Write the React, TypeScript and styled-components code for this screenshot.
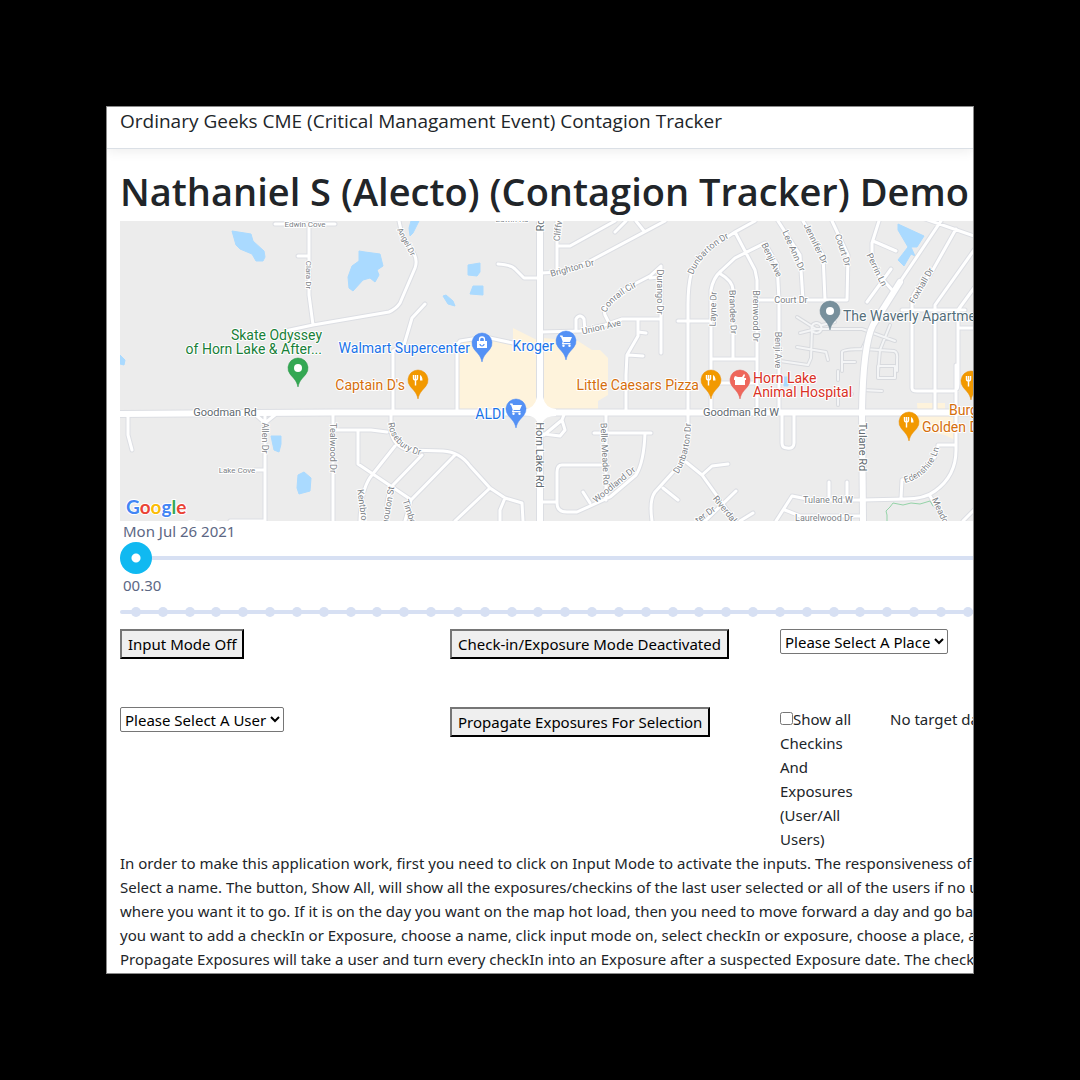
import React, { useState } from "react";
import styled, { createGlobalStyle } from "styled-components";

const GlobalStyle = createGlobalStyle`
  *, *::before, *::after { box-sizing: border-box; }
  body {
    margin: 0;
    background: #000;
    color: #212529;
    font-family: "Noto Sans", "Open Sans", sans-serif;
    font-size: 15px;
    line-height: 24px;
  }
`;

const Stage = styled.div`
  min-height: 100vh;
  padding: 106px;
`;

const Frame = styled.div`
  overflow: hidden;
  background: #fff;
  border: 1px solid #8a8a8a;
`;

const Header = styled.header`
  height: 42px;
  padding: 0 13px;
  border-bottom: 1px solid #dbe0e6;
  box-shadow: 0 2px 12px rgba(0, 0, 0, 0.08);
  font-family: "Open Sans", sans-serif;
  font-size: 19px;
  line-height: 28px;
  white-space: nowrap;
`;

const Content = styled.main`
  min-width: 1346px;
  padding: 18px 13px 2px;
`;

const Title = styled.h1`
  margin: 0 0 6px;
  font-family: "Open Sans", sans-serif;
  font-size: 38px;
  font-weight: 600;
  line-height: 48px;
  white-space: nowrap;
`;

const MapPane = styled.section`
  height: 300px;
  overflow: hidden;
  background: #ececec;

  svg {
    display: block;
    width: 100%;
    height: 300px;
  }
`;

const SliderLabel = styled.label`
  display: block;
  padding-left: 3px;
  color: #5c6784;
  line-height: 20px;
  height: 22px;
`;

const SliderRow = styled.div`
  position: relative;
  height: 30px;
  margin-bottom: 2px;
`;

const Range = styled.input`
  position: relative;
  display: block;
  width: 100%;
  height: 30px;
  margin: 0;
  appearance: none;
  background: transparent;

  &::-webkit-slider-runnable-track {
    height: 4px;
    border-radius: 2px;
    background: #d7e0f3;
  }

  &::-webkit-slider-thumb {
    appearance: none;
    width: 32px;
    height: 32px;
    margin-top: -14px;
    border-radius: 50%;
    background: radial-gradient(circle, #fff 4px, #10b9f1 5px);
  }
`;

const Ticks = styled.div`
  position: absolute;
  inset: 10px 11px;
  display: flex;
  justify-content: space-between;
`;

const Tick = styled.span`
  width: 10px;
  height: 10px;
  border-radius: 50%;
  background: #d7e0f3;
`;

const Controls = styled.div`
  display: grid;
  grid-template-columns: repeat(12, 1fr);
  row-gap: 48px;
`;

const Cell = styled.div<{ $span: number }>`
  grid-column: span ${(p) => p.$span};
  padding-right: ${(p) => (p.$span === 1 ? "30px" : "0")};
`;

const Button = styled.button`
  display: block;
  height: 30px;
  padding: 0 6px;
  border: 2px outset #767676;
  border-color: #767676 #212121 #212121 #767676;
  background: #efefef;
  color: #000;
  font-family: inherit;
  font-size: 15px;
  line-height: 26px;
  white-space: nowrap;
`;

const Select = styled.select`
  display: block;
  height: 25px;
  border: 1px solid #767676;
  border-radius: 2px;
  background: #fff;
  color: #000;
  font-family: inherit;
  font-size: 15px;
`;

const Checkbox = styled.input`
  width: 13px;
  height: 13px;
  margin: 0;
`;

const Help = styled.p`
  margin: 0;
  white-space: pre;
`;

/* ---------- Map data ---------- */

const ponds = [
  "232,231 251,234 253,241 264,251 265,257 263,261 256,261 252,254 240,249 236,245",
  "120,355 125,360 124,365 120,364",
  "359,251 365,252 380,254 383,266 377,270 379,275 375,282 370,278 363,280 353,291 349,288 348,277 352,266 359,261",
  "411,221 419,221 413,233 410,236 409,228",
  "468,265 480,263 480,272 477,276 468,275",
  "470,294 473,286 483,286 483,295",
  "443,296 446,295 453,301 455,306 448,304",
  "898,224 924,236 917,247 911,247 915,256 911,254 904,266 898,260 908,247 898,230",
  "271,436 281,436 281,444 279,452 274,450",
  "298,475 304,472 311,478 310,491 299,494 297,488",
  "784,377 788,377 788,386 784,386",
];

const lots = [
  "459,341 483,337 513,344 513,328 537,340 537,409 459,409",
  "543,338 578,341 592,350 600,350 608,358 608,395 598,401 598,409 543,409",
  "917,403 945,403 945,415 955,418 955,440 945,435 919,430",
];

const lanes = [
  "M797 317L816 329L800 333M816 329H862L895 341M812 329L811 358L808 365L780 361M797 347L826 352L828 360M822 325L835 322",
  "M842 371V352Q843 349 865 349L894 351Q898 352 897 360V371M842 362H855M890 325L880 350L878 372M870 333L862 349",
  "M816 323a5 5 0 1 0 1 0M862 390L882 391M838 405V396L852 394M838 380V371M878 366H895V378H878Z",
];

const streets = [
  "M275 224H335M309 226L309 295L313 325M298 256H309",
  "M285 331L313 325L389 312Q396 309 400 303L415 268Q418 260 413 252L402 235L399 221",
  "M425 304L412 318L404 345L393 351V412",
  "M498 264Q512 265 515 269L524 278H539",
  "M457 412V345L460 341L485 337L513 343",
  "M541 332L580 331L605 325L622 319H661M576 331V319Q580 313 584 319L585 331",
  "M557 221V272M541 273L560 272L590 261L665 221M557 246H570L615 221M636 221L644 231",
  "M610 325L605 315Q603 308 610 302L625 289L650 276L661 266V353M650 278L659 277",
  "M638 320V336L627 355L626 375V412M638 332L646 333M628 355L643 356",
  "M688 412V305Q688 264 703 253L735 232L755 221M688 412V440Q687 450 683 461L655 492Q649 500 652 521",
  "M735 232L755 270L757 280V412M678 321H710M711 412V290Q713 278 721 271L735 258L765 243L777 264L779 300V412",
  "M719 273Q733 281 733 290V359M711 359H757M711 383H757",
  "M778 221L800 255L803 300M803 221L823 255L825 300M832 221L848 255L847 300H755",
  "M879 221L872 243V260Q873 272 885 282L893 291M873 241L896 251M891 269L867 302",
  "M956 229L930 275Q912 292 912 300V388Q912 391 917 391H953Q958 391 958 384V310L974 288M935 412V305L974 250M902 310H965M958 328H974",
  "M128 415V435L132 450M265 415V521M255 470H265M257 416L265 423L275 415M230 521H265M333 415V521",
  "M333 430H371L387 432M391 412V432Q394 447 409 450L443 451Q460 452 470 466L490 488L505 498L522 503L523 521",
  "M358 430V464L410 499M395 446L372 475Q361 488 360 521M422 455L393 485Q386 495 386 521M455 455L411 500L405 521M490 488L455 521M505 498L500 510V521",
  "M543 502H557M601 465H562Q557 465 557 472V503Q557 512 567 512H577L610 497L636 475Q644 462 645 433M594 433H651M606 412V500M583 492L590 503",
  "M544 435L562 420L565 412M544 434L560 436L565 430L562 420",
  "M686 462L702 475L735 521M702 475L712 466L728 464M736 491L705 521M663 488L678 500M740 521L753 513",
  "M782 412V443Q782 448 787 448Q794 449 794 443V412M626 221L615 232",
  "M776 521L792 496L812 500H863L905 499Q925 499 935 491Q956 476 956 450V365M938 445H956M901 498L902 480Q936 470 938 445M829 482V498M847 482V498M785 510L800 516H863M930 496L945 521M974 510L963 521",
  "M941 221L873 322M925 219L974 236",
];

const arterials = [
  "M120 414L333 412.500H974",
  "M540 221V521",
  "M900 282L873 325Q863 345 862 412L863 521",
];

type Label = { t: string; x: number; y: number; r?: number; s?: number };

const streetLabels: Label[] = [
  { t: "Edwin Cove", x: 305, y: 227, s: 8 },
  { t: "Edwin Rd", x: 512, y: 222, s: 8 },
  { t: "Clara Dr", x: 306, y: 275, r: 90, s: 8 },
  { t: "Angel Dr", x: 404, y: 243, r: 62, s: 8 },
  { t: "Cliffw", x: 561, y: 230, r: -82, s: 9 },
  { t: "Brighton Dr", x: 573, y: 271, r: -15 },
  { t: "Durango Dr", x: 657, y: 292, r: 90 },
  { t: "Union Ave", x: 602, y: 330, r: -13 },
  { t: "Layne Dr", x: 716, y: 309, r: -88 },
  { t: "Brandee Dr", x: 730, y: 312, r: 88 },
  { t: "Brenwood Dr", x: 753, y: 316, r: 90 },
  { t: "Benji Ave", x: 769, y: 261, r: 65 },
  { t: "Benji Ave", x: 775, y: 350, r: 90 },
  { t: "Lee Ann Dr", x: 791, y: 252, r: 66 },
  { t: "Jennifer Dr", x: 813, y: 245, r: 64 },
  { t: "Court Dr", x: 840, y: 251, r: 72 },
  { t: "Court Dr", x: 791, y: 303 },
  { t: "Perrin Ln", x: 874, y: 271, r: 64 },
  { t: "Foxhall Dr", x: 924, y: 287, r: -60 },
  { t: "Allen Dr", x: 262, y: 438, r: 90 },
  { t: "Lake Cove", x: 237, y: 473, s: 8 },
  { t: "Cherry Dr", x: 204, y: 526, s: 8 },
  { t: "Tealwood Dr", x: 330, y: 448, r: 90 },
  { t: "Kentbrook", x: 360, y: 510, r: 82 },
  { t: "nouton St", x: 391, y: 506, r: -80 },
  { t: "Timber", x: 407, y: 514, r: 72 },
  { t: "Belle Meade Rd", x: 602, y: 454, r: 87 },
  { t: "Woodland Dr", x: 616, y: 487, r: -39 },
  { t: "ter Dr", x: 707, y: 517, r: -36 },
  { t: "Riverdale", x: 724, y: 513, r: 51 },
  { t: "Tulane Rd W", x: 828, y: 503 },
  { t: "Laurelwood Dr", x: 824, y: 521 },
  { t: "Meadow", x: 939, y: 515, r: 65 },
];

const curvedLabels = [
  { id: "rosebury", t: "Rosebury Dr", d: "M388 423Q390 438 402 447T430 456" },
  { id: "edenshire", t: "Edenshire Ln", d: "M905 483Q935 475 941 440" },
  { id: "dunbarton-n", t: "Dunbarton Dr", d: "M693 275Q701 252 734 235" },
  { id: "dunbarton-s", t: "Dunbarton Dr", d: "M678 474Q691 455 691 418" },
  { id: "conrail", t: "Conrail Cir", d: "M606 313Q612 299 640 285" },
];

const roadLabels: Label[] = [
  { t: "Goodman Rd", x: 225, y: 416 },
  { t: "Goodman Rd W", x: 741, y: 416 },
  { t: "Horn Lake Rd", x: 536, y: 455, r: 90 },
  { t: "Rd", x: 544, y: 225, r: -90 },
  { t: "Tulane Rd", x: 859, y: 447, r: 90 },
];

type Place = { t: string; x: number; y: number; c: string; end?: boolean };

const places: Place[] = [
  { t: "Skate Odyssey", x: 322, y: 340, c: "#188038", end: true },
  { t: "of Horn Lake & After...", x: 322, y: 354, c: "#188038", end: true },
  { t: "Walmart Supercenter", x: 470, y: 353, c: "#1a73e8", end: true },
  { t: "Captain D's", x: 405, y: 390, c: "#d56e0c", end: true },
  { t: "Kroger", x: 554, y: 351, c: "#1a73e8", end: true },
  { t: "ALDI", x: 505, y: 419, c: "#1a73e8", end: true },
  { t: "Little Caesars Pizza", x: 699, y: 390, c: "#d56e0c", end: true },
  { t: "Horn Lake", x: 753, y: 383, c: "#d93025" },
  { t: "Animal Hospital", x: 753, y: 397, c: "#d93025" },
  { t: "The Waverly Apartments", x: 843, y: 321, c: "#546e7a" },
  { t: "Burger King", x: 949, y: 415, c: "#d56e0c" },
  { t: "Golden Dragon", x: 922, y: 432, c: "#d56e0c" },
];

type Glyph = "dot" | "bag" | "cart" | "fork" | "pet";

const glyphs: Record<Glyph, React.ReactNode> = {
  dot: <circle r="4" fill="#fff" />,
  bag: (
    <g fill="none" stroke="#fff">
      <path d="M-5 -2H5V5H-5Z" fill="#fff" stroke="none" />
      <path d="M-2.500 -2V-3.500a2.500 2.500 0 0 1 5 0V-2" strokeWidth="1.300" />
      <path d="M-2 1a2 2 0 0 0 4 0" stroke="#5491f5" strokeWidth="1.200" />
    </g>
  ),
  cart: (
    <g fill="#fff">
      <path d="M-6 -5.500H-3.500L-3 -4H6L3.800 1H-2.200L-2.700 2H4.500V3.300H-4.200L-3.300 0.800L-5 -4.200H-6Z" />
      <circle cx="-2.500" cy="4.700" r="1.200" />
      <circle cx="3.500" cy="4.700" r="1.200" />
    </g>
  ),
  fork: (
    <g fill="none" stroke="#fff">
      <path d="M-4.500 -5V-2Q-4.500 0 -2.500 0Q-0.500 0 -0.500 -2V-5M-2.500 -5V5.500" strokeWidth="1.400" />
      <path d="M2 5.500V-5Q4.500 -4 4.500 0.500H2Z" fill="#fff" stroke="none" />
    </g>
  ),
  pet: <path d="M-5 -4L-2 -3L2 -3L4 -6L5 -5L4 -2H6V0H5V5H-5V0H-6V-2Z" fill="#fff" />,
};

const pins: { x: number; y: number; c: string; b: string; g: Glyph }[] = [
  { x: 298, y: 368, c: "#34a853", b: "#1e8e3e", g: "dot" },
  { x: 482, y: 343, c: "#5491f5", b: "#4285f4", g: "bag" },
  { x: 566, y: 341, c: "#5491f5", b: "#4285f4", g: "cart" },
  { x: 516, y: 409, c: "#5491f5", b: "#4285f4", g: "cart" },
  { x: 418, y: 380, c: "#f29900", b: "#e68a00", g: "fork" },
  { x: 711, y: 380, c: "#f29900", b: "#e68a00", g: "fork" },
  { x: 740, y: 380, c: "#ee675c", b: "#e0574c", g: "pet" },
  { x: 909, y: 422, c: "#f29900", b: "#e68a00", g: "fork" },
  { x: 971, y: 381, c: "#f29900", b: "#e68a00", g: "fork" },
  { x: 830, y: 311, c: "#78909c", b: "#607d8b", g: "dot" },
];

const logo: [string, string][] = [
  ["G", "#4285f4"],
  ["o", "#ea4335"],
  ["o", "#fbbc05"],
  ["g", "#4285f4"],
  ["l", "#34a853"],
  ["e", "#ea4335"],
];

const MapText = styled.text<{ $size: number }>`
  font-family: Roboto, sans-serif;
  font-size: ${(p) => p.$size}px;
  stroke: #fff;
  stroke-width: 2px;
  stroke-linejoin: round;
  paint-order: stroke;
`;

const LogoText = styled.text`
  font-family: Lato, sans-serif;
  font-size: 19px;
  font-weight: 700;
  stroke: #fff;
  stroke-width: 2px;
  paint-order: stroke;
`;

function turn(l: Label) {
  return l.r ? `rotate(${l.r} ${l.x} ${l.y})` : undefined;
}

function StreetMap() {
  return (
    <MapPane aria-label="Map">
      <svg viewBox="120 221 854 300" preserveAspectRatio="xMinYMin meet">
        <defs>
          {curvedLabels.map((l) => (
            <path key={l.id} id={l.id} d={l.d} />
          ))}
        </defs>
        {lots.map((p) => (
          <polygon key={p} points={p} fill="#fef3dc" />
        ))}
        {ponds.map((p) => (
          <polygon key={p} points={p} fill="#aadaff" stroke="#aadaff" strokeLinejoin="round" />
        ))}
        <g fill="none" strokeLinecap="round" strokeLinejoin="round">
          <path d={lanes.join("")} stroke="#d8dade" strokeWidth="4" />
          <path d={lanes.join("")} stroke="#f4f5f6" strokeWidth="2" />
          <path d={streets.join("")} stroke="#dcdee3" strokeWidth="5" />
          <path d={arterials.join("")} stroke="#dcdee3" strokeWidth="8" />
          <path d={streets.join("")} stroke="#fff" strokeWidth="3" />
          <path d={arterials.join("")} stroke="#fff" strokeWidth="6" />
          <path
            d="M887 521V515L886 511L890 507L893 503L903 505L911 503L920 504L930 501L933 506"
            stroke="#94d3a8"
          />
        </g>
        <path d="M524 410Q535 408 537 397H543Q545 408 556 409V416Q545 416 543 422H537Q536 416 524 415Z" fill="#fff" />
        {streetLabels.map((l) => (
          <MapText key={l.t + l.x} x={l.x} y={l.y} $size={l.s || 9} fill="#7d8287" textAnchor="middle" transform={turn(l)}>
            {l.t}
          </MapText>
        ))}
        {curvedLabels.map((l) => (
          <MapText key={l.id} $size={9} fill="#7d8287">
            <textPath href={`#${l.id}`}>{l.t}</textPath>
          </MapText>
        ))}
        {roadLabels.map((l) => (
          <MapText key={l.t + l.x} x={l.x} y={l.y} $size={11} fill="#5f6a70" textAnchor="middle" transform={turn(l)}>
            {l.t}
          </MapText>
        ))}
        {pins.map((p) => (
          <g key={p.x} transform={`translate(${p.x} ${p.y})`}>
            <path
              d="M0 19C-1.500 12 -5 10 -8 6A10 10 0 1 1 8 6C5 10 1.500 12 0 19Z"
              fill={p.c}
              stroke={p.b}
              strokeWidth="0.500"
            />
            {glyphs[p.g]}
          </g>
        ))}
        {places.map((p) => (
          <MapText key={p.t} x={p.x} y={p.y} $size={14} fill={p.c} textAnchor={p.end ? "end" : "start"}>
            {p.t}
          </MapText>
        ))}
        <LogoText x="126" y="514">
          {logo.map(([ch, color], i) => (
            <tspan key={i} fill={color}>
              {ch}
            </tspan>
          ))}
        </LogoText>
      </svg>
    </MapPane>
  );
}

const helpText = [
  "In order to make this application work, first you need to click on Input Mode to activate the inputs. The responsiveness of the",
  "Select a name. The button, Show All, will show all the exposures/checkins of the last user selected or all of the users if no user",
  "where you want it to go. If it is on the day you want on the map hot load, then you need to move forward a day and go back",
  "you want to add a checkIn or Exposure, choose a name, click input mode on, select checkIn or exposure, choose a place, and",
  "Propagate Exposures will take a user and turn every checkIn into an Exposure after a suspected Exposure date. The checkIn",
].join("\n");

const halfHours = Array.from({ length: 49 }, (_, i) => i);

export default function App() {
  const [day, setDay] = useState(0);
  const [slot, setSlot] = useState(48);
  const [showAll, setShowAll] = useState(false);

  return (
    <Stage>
      <GlobalStyle />
      <Frame>
        <Header>Ordinary Geeks CME (Critical Managament Event) Contagion Tracker</Header>
        <Content>
          <Title>Nathaniel S (Alecto) (Contagion Tracker) Demo</Title>
          <StreetMap />
          <SliderLabel htmlFor="day">Mon Jul 26 2021</SliderLabel>
          <SliderRow>
            <Range id="day" type="range" min={0} max={30} value={day} onChange={(e) => setDay(Number(e.target.value))} />
          </SliderRow>
          <SliderLabel htmlFor="time">00.30</SliderLabel>
          <SliderRow>
            <Ticks>
              {halfHours.map((h) => (
                <Tick key={h} />
              ))}
            </Ticks>
            <Range id="time" type="range" min={0} max={48} value={slot} onChange={(e) => setSlot(Number(e.target.value))} />
          </SliderRow>
          <Controls>
            <Cell $span={3}>
              <Button type="button">Input Mode Off</Button>
            </Cell>
            <Cell $span={3}>
              <Button type="button">Check-in/Exposure Mode Deactivated</Button>
            </Cell>
            <Cell $span={6}>
              <Select aria-label="Place">
                <option>Please Select A Place</option>
              </Select>
            </Cell>
            <Cell $span={3}>
              <Select aria-label="User">
                <option>Please Select A User</option>
              </Select>
            </Cell>
            <Cell $span={3}>
              <Button type="button">Propagate Exposures For Selection</Button>
            </Cell>
            <Cell $span={1}>
              <Checkbox id="all" type="checkbox" checked={showAll} onChange={(e) => setShowAll(e.target.checked)} />
              <label htmlFor="all">Show all Checkins And Exposures (User/All Users)</label>
            </Cell>
            <Cell $span={5}>No target date</Cell>
          </Controls>
          <Help>{helpText}</Help>
        </Content>
      </Frame>
    </Stage>
  );
}
